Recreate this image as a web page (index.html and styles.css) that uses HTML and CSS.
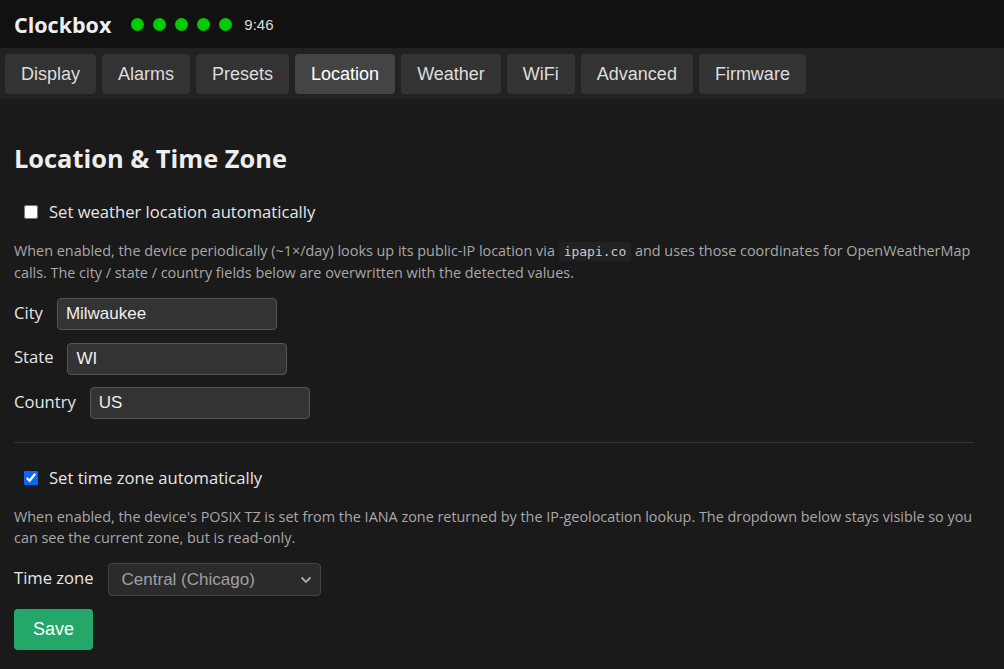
FILE: index.html
```html
<!DOCTYPE html>
<html lang="en">
<head>
    <meta charset="UTF-8">
    <meta name="viewport" content="width=device-width, initial-scale=1.0">
    <title>Clockbox</title>
    <link rel="stylesheet" href="styles.css">
</head>
<body>
    <header class="topbar">
        <span class="brand">Clockbox</span>
        <span class="dots">
            <span class="dot"></span>
            <span class="dot"></span>
            <span class="dot"></span>
            <span class="dot"></span>
            <span class="dot"></span>
        </span>
        <span class="clock">9:46</span>
    </header>

    <nav class="tabs">
        <button class="tab">Display</button>
        <button class="tab">Alarms</button>
        <button class="tab">Presets</button>
        <button class="tab active">Location</button>
        <button class="tab">Weather</button>
        <button class="tab">WiFi</button>
        <button class="tab">Advanced</button>
        <button class="tab">Firmware</button>
    </nav>

    <main class="content">
        <h2>Location &amp; Time Zone</h2>

        <label class="check">
            <input type="checkbox" id="autoLocation">
            Set weather location automatically
        </label>
        <p class="help">When enabled, the device periodically (~1×/day) looks up its public-IP location via <code>ipapi.co</code> and uses those coordinates for OpenWeatherMap calls. The city / state / country fields below are overwritten with the detected values.</p>

        <div class="field">
            <label for="city">City</label>
            <input type="text" id="city" value="Milwaukee">
        </div>
        <div class="field">
            <label for="state">State</label>
            <input type="text" id="state" value="WI">
        </div>
        <div class="field">
            <label for="country">Country</label>
            <input type="text" id="country" value="US">
        </div>

        <hr>

        <label class="check second">
            <input type="checkbox" id="autoTz" checked>
            Set time zone automatically
        </label>
        <p class="help">When enabled, the device's POSIX TZ is set from the IANA zone returned by the IP-geolocation lookup. The dropdown below stays visible so you can see the current zone, but is read-only.</p>

        <div class="field tz-row">
            <label for="tz">Time zone</label>
            <span class="select-wrap">
                <select id="tz">
                    <option>Central (Chicago)</option>
                </select>
                <svg class="chevron" width="12" height="8" viewBox="0 0 12 8">
                    <path d="M1.5 1.5 L6 6 L10.5 1.5" fill="none" stroke="#aaa" stroke-width="1.8"/>
                </svg>
            </span>
        </div>

        <button class="save">Save</button>
    </main>
</body>
</html>
```

FILE: styles.css
```css
body {
    margin: 0;
    background: #1a1a1a;
    color: #e6e6e6;
    font-family: 'Open Sans', 'Noto Sans', sans-serif;
}

.topbar {
    background: #111;
    height: 48px;
    display: flex;
    align-items: center;
    padding: 0 14px;
}

.brand {
    font-size: 21.5px;
    font-weight: bold;
    color: #eee;
    margin-right: 20px;
}

.dots {
    display: flex;
    gap: 9px;
    margin-right: 12px;
}

.dot {
    width: 13px;
    height: 13px;
    border-radius: 50%;
    background: #00cc00;
}

.clock {
    font-family: 'Liberation Sans', Arial, sans-serif;
    font-size: 15px;
    color: #ddd;
}

.tabs {
    background: #222;
    display: flex;
    gap: 6px;
    padding: 6px 5px 5px;
}

.tab {
    background: #333;
    color: #ddd;
    border: none;
    border-radius: 4px;
    height: 40px;
    padding: 0 16px;
    font-family: 'Liberation Sans', Arial, sans-serif;
    font-size: 18px;
}

.tab.active {
    background: #444;
    color: #fff;
}

.content {
    max-width: 960px;
    padding: 22px 14px 20px;
}

h2 {
    font-size: 25.4px;
    margin: 20px 0 25px;
    color: #eee;
}

.check {
    display: flex;
    align-items: center;
    gap: 11px;
    font-size: 16.6px;
    margin-left: 10px;
}

.check.second {
    margin-top: -3px;
}

.check input {
    width: 14px;
    height: 14px;
    margin: 0;
    accent-color: #0a66ff;
}

.help {
    font-size: 14.4px;
    line-height: 21px;
    color: #a8a8a8;
    margin: 17px 0 15px;
}

code {
    font-family: 'DejaVu Sans Mono', monospace;
    font-size: 13px;
    background: #222;
    color: #ccc;
    padding: 2px 5px;
    border-radius: 3px;
}

.field {
    display: flex;
    align-items: center;
    gap: 14px;
    margin-bottom: 12.5px;
    font-size: 16.6px;
}

.field label {
    position: relative;
    top: -2px;
}

.field input {
    width: 220px;
    height: 32px;
    box-sizing: border-box;
    background: #333;
    border: 1px solid #555;
    border-radius: 4px;
    color: #eee;
    font-family: 'Liberation Sans', Arial, sans-serif;
    font-size: 17px;
    padding: 0 8px;
}

.tz-row {
    margin-top: 1px;
}

.select-wrap {
    position: relative;
    display: inline-block;
}

.select-wrap select {
    appearance: none;
    width: 213px;
    height: 33px;
    box-sizing: border-box;
    background: #2b2b2b;
    color: #a0a0a0;
    border: 1px solid #444;
    border-radius: 4px;
    font-family: 'Liberation Sans', Arial, sans-serif;
    font-size: 17px;
    padding: 0 13px;
}

.chevron {
    position: absolute;
    right: 9px;
    top: 13px;
    pointer-events: none;
}

hr {
    border: none;
    border-top: 1px solid #333;
    margin: 23px 0 26px;
}

.save {
    background: #23a86a;
    color: #fff;
    border: none;
    border-radius: 4px;
    font-family: 'Liberation Sans', Arial, sans-serif;
    font-size: 18px;
    padding: 0 19px;
    height: 41px;
}
```
